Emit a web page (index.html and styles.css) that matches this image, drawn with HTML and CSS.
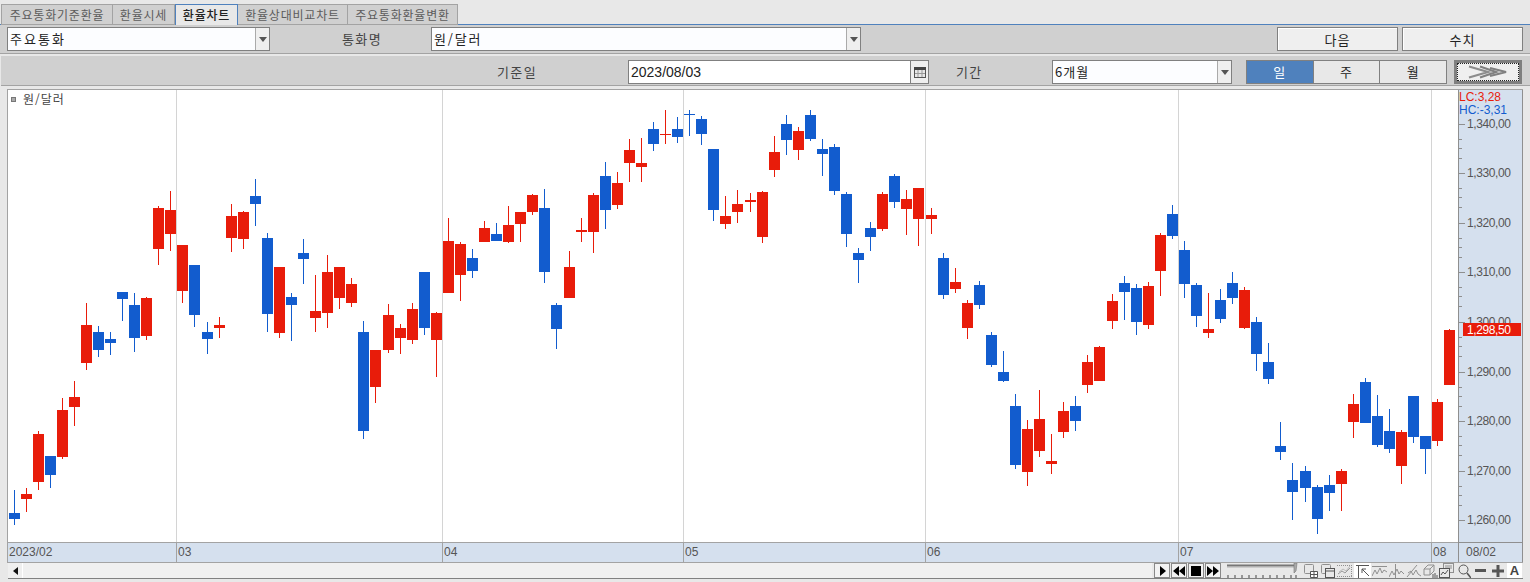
FILE: index.html
```html
<!DOCTYPE html>
<html lang="ko">
<head>
    <meta charset="UTF-8">
    <title>환율차트</title>
    <link rel="stylesheet" href="styles.css">
</head>
<body>

<!--tabs-->
<ul class="tabs">
    <li class="tab1">주요통화기준환율</li>
    <li class="tab2">환율시세</li>
    <li class="tab3 current">환율차트</li>
    <li class="tab4">환율상대비교차트</li>
    <li class="tab5">주요통화환율변환</li>
</ul>

<!--first bar-->
<div class="bar bar1">
    <div class="combo combo1">
        <span class="combo-text">주요통화</span>
        <span class="combo-btn"><i class="caret"></i></span>
    </div>
    <span class="label label-name">통화명</span>
    <div class="combo combo2">
        <span class="combo-text">원/달러</span>
        <span class="combo-btn"><i class="caret"></i></span>
    </div>
    <div class="actions">
        <button class="btn">다음</button>
        <button class="btn">수치</button>
    </div>
</div>

<!--second bar-->
<div class="bar bar2">
    <span class="label label-date">기준일</span>
    <div class="combo date">
        <span class="combo-text num">2023/08/03</span>
        <span class="combo-btn">
            <svg width="12" height="11" viewBox="0 0 12 11">
                <rect x="0.5" y="0.5" width="11" height="10" fill="#e8e8e8" stroke="#555"/>
                <rect x="0" y="0" width="12" height="3" fill="#444"/>
                <path d="M4 3v7M8 3v7M1 6.5h10" stroke="#999" fill="none"/>
            </svg>
        </span>
    </div>
    <span class="label label-period">기간</span>
    <div class="combo combo3">
        <span class="combo-text">6개월</span>
        <span class="combo-btn"><i class="caret"></i></span>
    </div>
    <div class="seg">
        <span class="on">일</span>
        <span>주</span>
        <span>월</span>
    </div>
    <button class="arrow-btn">
        <svg width="40" height="14" viewBox="0 0 40 14">
            <path d="M1 1.5L20 7L1 12.5" fill="none" stroke="#8c8c8c" stroke-width="2.2"/>
            <path d="M12 1.5L28 7L12 12.5" fill="none" stroke="#808080" stroke-width="2.2"/>
            <path d="M22 3L38 7L22 11" fill="none" stroke="#808080" stroke-width="2.2"/>
        </svg>
    </button>
</div>

<!--chart-->
<div class="chart">
    <div class="plot">
        <svg id="plot" class="plot-svg" width="1449" height="452" viewBox="8 90 1449 452"></svg>
        <div class="legend"><i class="legend-mark"></i>원/달러</div>
    </div>
    <div class="axis">
        <svg id="axis" width="64" height="452" viewBox="1458 90 64 452"></svg>
    </div>
    <div class="dates">
        <span>2023/02</span>
        <span>03</span>
        <span>04</span>
        <span>05</span>
        <span>06</span>
        <span>07</span>
        <span>08</span>
    </div>
    <div class="last-date">08/02</div>
</div>

<!--scroll and tools-->
<div class="tools">
    <span class="scroll-btn"><i class="tri-left"></i></span>
    <div class="track"></div>
    <div class="player">
        <span><svg width="7" height="10" viewBox="0 0 7 10"><path d="M1 0L7 5L1 10z"/></svg></span>
        <span><svg width="12" height="10" viewBox="0 0 12 10"><path d="M6 0L0 5L6 10zM12 0L6 5L12 10z"/></svg></span>
        <span><svg width="10" height="10" viewBox="0 0 10 10"><rect width="10" height="10"/></svg></span>
        <span><svg width="12" height="10" viewBox="0 0 12 10"><path d="M0 0L6 5L0 10zM6 0L12 5L6 10z"/></svg></span>
    </div>
    <svg class="slider" width="72" height="15" viewBox="0 0 72 15">
        <path d="M1 2.5h67" stroke="#777" stroke-width="2"/>
        <path d="M1 4.5h67" stroke="#ccc"/>
        <path d="M68 0h3l-1 8l-2 2z" fill="#aaa" stroke="#777" stroke-width="0.6"/>
        <path d="M2 12v3M9 12v3M16 12v3M23 12v3M30 12v3M37 12v3M44 12v3M51 12v3M58 12v3M65 12v3M70 12v3" stroke="#444"/>
    </svg>
    <div class="icons">
        <svg class="ico ico-first" width="14" height="14" viewBox="0 0 14 14">
            <rect x="0.5" y="0.5" width="9" height="9" rx="1"/>
            <path class="dark" d="M6.5 7.5h7v6h-7zM10 7.5v6M6.5 10.5h7" fill="#fff"/>
        </svg>
        <svg class="ico" width="14" height="14" viewBox="0 0 14 14">
            <rect x="0.5" y="0.5" width="9" height="9" rx="1"/>
            <rect class="dark" x="4.5" y="4.5" width="9" height="9" fill="#e8e8e8"/>
            <path class="dark" d="M4.5 7h9"/>
        </svg>
        <svg class="ico" width="15" height="14" viewBox="0 0 15 14">
            <path d="M0 1.5h15M0 12.5h15M14.5 1v12" stroke-dasharray="1 1"/>
            <path d="M1 10L5 7L8 9L13 4" stroke="#999"/>
            <path d="M2 8L6 5L9 7L13 2" stroke="#bbb"/>
        </svg>
        <span class="ico-on">
            <svg class="ico" width="14" height="14" viewBox="0 0 14 14">
                <path class="dark" d="M0 1.5h13M2.5 2v12M13 12L6 5M6 9V5h4"/>
            </svg>
        </span>
        <svg class="ico" width="15" height="14" viewBox="0 0 15 14">
            <path d="M0 2.5h15"/>
            <path d="M0 12L3 6L5 10L8 4L10 9L12 6L15 8"/>
        </svg>
        <svg class="ico" width="15" height="14" viewBox="0 0 15 14">
            <path d="M6.5 0v14"/>
            <path d="M0 13L3 7L5 11L8 5L10 10L12 7L15 10"/>
        </svg>
        <svg class="ico" width="15" height="14" viewBox="0 0 15 14">
            <path d="M1 13L11 1"/>
            <path d="M2 9L5 7L7 11L10 6L12 10L15 12"/>
        </svg>
        <svg class="ico ico-tight" width="15" height="14" viewBox="0 0 15 14">
            <path d="M1 5L5 1h6v6L7 11H1zM1 5h6v6M7 5L11 1"/>
            <path class="dark" d="M10 10v4M12 9v5M14 11v3"/>
        </svg>
        <svg class="ico" width="15" height="15" viewBox="0 0 15 15">
            <rect x="4.5" y="0.5" width="10" height="9"/>
            <path d="M6 3h7M6 5h7"/>
            <rect class="dark" x="0.5" y="5.5" width="10" height="9" fill="#e8e8e8"/>
            <path class="dark" d="M2 12L4 9L6 11L9 7"/>
        </svg>
        <svg class="ico glass" width="13" height="14" viewBox="0 0 13 14">
            <circle cx="5.5" cy="5.5" r="4.5"/>
            <path d="M9 9L13 14" stroke-width="1.6"/>
        </svg>
        <svg class="ico minus" width="11" height="3" viewBox="0 0 11 3"><rect width="11" height="3"/></svg>
        <svg class="ico plus" width="12" height="12" viewBox="0 0 12 12"><path d="M0 4.5h12v3H0zM4.5 0h3v12h-3z"/></svg>
        <span class="ico-a">A</span>
    </div>
</div>

<script src="chart.js"></script>
</body>
</html>
```

FILE: styles.css
```css
*{
    margin: 0;
    padding: 0;
    box-sizing: border-box;
}

body{
    width: 1530px;
    height: 582px;
    overflow: hidden;
    background: #e8e8e8;
    font-family: "Noto Sans CJK KR", "Liberation Sans", sans-serif;
    font-size: 13px;
    letter-spacing: 1px;
    color: #333;
}

.num{
    font-family: "Liberation Sans", sans-serif;
    letter-spacing: 0;
}

/*tabs*/
.tabs{
    display: flex;
    height: 25px;
    padding: 4px 0 0 1px;
    list-style: none;
    border-bottom: 1px solid #4f81bd;
}

.tabs li{
    height: 21px;
    line-height: 19px;
    text-align: center;
    font-size: 12px;
    letter-spacing: 0.8px;
    color: #5c5c5c;
    background: #d0d0d0;
    border: 1px solid #a3a3a3;
    border-left: 0;
    white-space: nowrap;
}

.tabs .tab1{
    width: 112px;
    border-left: 1px solid #a3a3a3;
}
.tabs .tab2{ width: 62px; }
.tabs .tab3{ width: 63px; }
.tabs .tab4{ width: 110px; }
.tabs .tab5{ width: 110px; }

.tabs li.current{
    height: 21px;
    color: #222;
    font-weight: 500;
    background: #e8e8e8;
    border: 1px solid #4f81bd;
    border-bottom: 0;
}

/*bars*/
.bar{
    display: flex;
    align-items: flex-start;
    background: #d0d0d0;
    border-bottom: 1px solid #a3a3a3;
}

.bar1{
    height: 29px;
    padding: 2px 7px 0;
}

.bar2{
    height: 30px;
    margin: 2px 0 3px 1px;
    padding: 4px 0 0 496px;
}

.label{
    line-height: 24px;
    letter-spacing: 1.4px;
    color: #444;
    white-space: nowrap;
}

.label-name{
    width: 89px;
    margin-left: 72px;
}

.label-date{
    width: 40px;
}

.label-period{
    width: 27px;
    margin-left: 27px;
}

/*combo*/
.combo{
    display: flex;
    height: 24px;
    background: #fcfdff;
    border: 1px solid #808080;
}

.combo1{ width: 263px; }
.combo2{ width: 430px; }
.combo3{ width: 180px; margin-left: 69px; }
.date{ width: 301px; margin-left: 91px; background: #fff; }

.combo-text{
    flex: 1;
    padding-left: 2px;
    line-height: 21px;
    color: #222;
    white-space: nowrap;
}

.combo1 .combo-text{
    letter-spacing: 2px;
}

.combo2 .combo-text{
    letter-spacing: 1.8px;
}

.date .combo-text{
    line-height: 22px;
    font-size: 14px;
    letter-spacing: 0;
}

.combo-btn{
    display: flex;
    align-items: center;
    justify-content: center;
    width: 14px;
    background: #efefef;
    border-left: 1px solid #aaa;
}

.date .combo-btn{
    width: 18px;
    border-left-color: #808080;
}

.caret{
    width: 0;
    height: 0;
    border-top: 5px solid #555;
    border-left: 4px solid transparent;
    border-right: 4px solid transparent;
}

/*buttons*/
.actions{
    display: flex;
    gap: 4px;
    margin-left: auto;
}

.btn{
    width: 121px;
    height: 24px;
    font: inherit;
    letter-spacing: 1px;
    color: #222;
    background: #efefef;
    border: 1px solid #808080;
    box-shadow: inset 1px 1px 0 #fff;
}

.seg{
    display: flex;
    width: 201px;
    height: 24px;
    margin-left: 14px;
    background: #e8e8e8;
    border: 1px solid #808080;
}

.seg span{
    flex: 1;
    text-align: center;
    line-height: 21px;
    color: #222;
    border-left: 1px solid #808080;
}

.seg span:first-child{
    border-left: 0;
}

.seg .on{
    color: #fff;
    background: #4f81bd;
}

.arrow-btn{
    display: flex;
    align-items: center;
    justify-content: center;
    width: 68px;
    height: 24px;
    margin-left: 7px;
    background: #efefef;
    border: 3px solid #7f7f7f;
    outline: 1px dotted #222;
    outline-offset: -4px;
}

/*chart*/
.chart{
    display: grid;
    grid-template-columns: 1450px 65px;
    grid-template-rows: 452px 20px;
    width: 1516px;
    height: 474px;
    margin-left: 7px;
    border-top: 1px solid #a3a3a3;
    border-left: 1px solid #a3a3a3;
    border-bottom: 1px solid #a3a3a3;
    color: #555;
    font-family: "Liberation Sans", sans-serif;
    font-size: 12px;
    letter-spacing: 0;
}

.plot{
    position: relative;
    background: #fff;
}

.plot-svg{
    display: block;
}

.legend{
    position: absolute;
    top: 1px;
    left: 3px;
    display: flex;
    align-items: center;
    gap: 7px;
    font-family: "Noto Sans CJK KR", sans-serif;
    font-size: 12px;
    letter-spacing: 1px;
    line-height: 16px;
    color: #444;
}

.legend-mark{
    width: 5px;
    height: 5px;
    background: #aaa;
    border: 1px solid #777;
}

.axis{
    background: #d5e0ee;
    border-left: 1px solid #8f8f8f;
    border-right: 1px solid #8f8f8f;
}

.axis svg{
    display: block;
}

.axis text{
    font-family: "Liberation Sans", sans-serif;
    font-size: 12px;
    letter-spacing: -0.4px;
    fill: #555;
}

.axis .lc{ fill: #e81c0a; letter-spacing: 0; }
.axis .hc{ fill: #125cce; letter-spacing: 0; }
.axis .last{ fill: #fff; }

.dates{
    display: grid;
    grid-template-columns: 169px 266px 241px 242px 253px 253px 26px;
    background: #d5e0ee;
    border-top: 1px solid #a3a3a3;
    line-height: 18px;
}

.dates span{
    padding-left: 1px;
    border-right: 1px solid #a3a3a3;
}

.dates span:last-child{
    border-right: 0;
}

.last-date{
    padding-left: 7px;
    line-height: 18px;
    background: #d5e0ee;
    border: 1px solid #8f8f8f;
    border-bottom: 0;
}

/*scroll and tools*/
.tools{
    display: flex;
    align-items: center;
    width: 1515px;
    height: 16px;
    margin-left: 8px;
    border-bottom: 1px solid #808080;
}

.tools > *{
    flex-shrink: 0;
}

.scroll-btn{
    display: flex;
    align-items: center;
    justify-content: center;
    width: 15px;
    height: 15px;
    background: #efefef;
    border-right: 1px solid #fff;
}

.tri-left{
    width: 0;
    height: 0;
    border-right: 5px solid #111;
    border-top: 4px solid transparent;
    border-bottom: 4px solid transparent;
}

.track{
    width: 1129px;
    height: 15px;
    background: #f0f0f0;
}

.player{
    display: flex;
    gap: 1px;
    margin-left: 2px;
}

.player span{
    display: flex;
    align-items: center;
    justify-content: center;
    width: 16px;
    height: 15px;
    background: #f2f2f2;
    border: 1px solid #888;
}

.slider{
    margin-left: 5px;
}

.icons{
    display: flex;
    align-items: center;
    margin-left: 6px;
}

.ico{
    display: block;
    flex-shrink: 0;
    margin-right: 2px;
    fill: none;
    stroke: #909090;
}

.ico-first{
    margin-right: 3px;
}

.ico-tight{
    margin-right: 1px;
}

.ico .dark{
    stroke: #555;
}

.ico-on{
    display: flex;
    align-items: center;
    justify-content: center;
    width: 17px;
    height: 15px;
    margin-right: 1px;
    background: #fff;
}

.ico-on .ico{
    margin: 0;
}

.glass{
    margin: 0 4px 0 2px;
    stroke: #555;
}

.minus,
.plus{
    stroke: none;
    fill: #555;
}

.minus{
    margin-right: 6px;
}

.plus{
    margin-right: 3px;
}

.ico-a{
    width: 15px;
    height: 15px;
    line-height: 15px;
    text-align: center;
    font-family: "Liberation Sans", sans-serif;
    font-size: 13px;
    font-weight: bold;
    letter-spacing: 0;
    color: #444;
    background: #fff;
}

/*candles*/
.grid{
    stroke: #d4d4d4;
}

.up{ fill: #e81c0a; }
.down{ fill: #125cce; }
.tick{ stroke: #8f8f8f; }
```

FILE: chart.js
```js
// all numbers are page pixels: left, wick top, wick bottom, body top, body bottom, r = red / b = blue
var candles = [
    [9,490,525,513,519,'b'],[21,488,512,494,499,'r'],[33,431,490,434,482,'r'],[45,456,488,456,475,'b'],
    [57,398,459,410,457,'r'],[69,381,426,397,407,'r'],[81,303,370,325,363,'r'],[93,326,357,332,350,'b'],
    [105,332,355,339,343,'b'],[117,292,321,292,299,'b'],[129,293,352,305,338,'b'],[141,297,340,298,336,'r'],
    [153,206,265,208,249,'r'],[165,191,251,210,234,'r'],[177,245,303,245,291,'r'],[189,265,327,265,315,'b'],
    [202,322,354,332,339,'b'],[214,317,338,325,328,'r'],[226,204,252,216,238,'r'],[238,211,249,212,239,'r'],
    [250,179,226,196,204,'b'],[262,233,332,238,314,'b'],[274,267,338,267,333,'r'],[286,293,341,297,305,'b'],
    [298,239,284,253,259,'b'],[310,275,332,311,318,'r'],[322,255,328,272,313,'r'],[334,267,309,267,298,'r'],
    [346,278,307,284,303,'r'],[358,321,439,332,431,'b'],[370,350,403,350,387,'r'],[383,304,353,315,350,'r'],
    [395,324,354,328,338,'r'],[407,303,344,309,340,'r'],[419,272,335,272,328,'b'],[431,312,377,313,340,'r'],
    [443,218,293,241,293,'r'],[455,242,301,244,275,'r'],[467,249,278,258,271,'b'],[479,221,242,228,242,'r'],
    [491,223,241,234,241,'b'],[503,206,243,225,242,'r'],[515,212,242,212,224,'r'],[527,194,215,195,212,'r'],
    [539,189,283,208,272,'b'],[551,303,349,305,329,'b'],[564,251,298,267,298,'r'],[576,218,242,230,232,'r'],
    [588,193,253,195,232,'r'],[600,162,229,176,210,'b'],[612,172,209,183,205,'r'],[624,139,182,150,163,'r'],
    [636,138,182,163,167,'r'],[648,122,151,129,144,'b'],[660,110,144,134,135,'r'],[672,117,143,129,137,'b'],
    [684,110,136,114,115,'b'],[696,116,145,119,134,'b'],[708,149,221,149,210,'b'],[720,196,229,216,224,'r'],
    [732,190,223,204,212,'r'],[745,193,212,200,202,'r'],[757,191,243,192,237,'r'],[769,136,177,152,170,'r'],
    [781,115,155,124,140,'b'],[793,127,160,131,150,'r'],[805,110,141,115,139,'b'],[817,139,176,149,154,'b'],
    [829,144,195,147,191,'b'],[841,192,247,194,234,'b'],[853,248,283,253,260,'b'],[865,222,251,228,237,'b'],
    [877,192,231,194,229,'r'],[889,174,208,176,202,'b'],[901,190,235,199,209,'r'],[913,188,246,188,219,'r'],
    [926,208,234,215,219,'r'],[938,253,299,258,295,'b'],[950,268,293,282,289,'r'],[962,300,339,303,328,'r'],
    [974,281,309,285,305,'b'],[986,332,367,335,365,'b'],[998,351,382,372,381,'b'],[1010,394,469,406,465,'b'],
    [1022,420,486,429,472,'r'],[1034,390,457,419,451,'r'],[1046,434,474,461,464,'r'],[1058,402,438,411,432,'r'],
    [1070,396,431,406,421,'b'],[1082,355,393,362,385,'r'],[1094,346,381,347,381,'r'],[1107,294,329,301,321,'r'],
    [1119,276,320,283,292,'b'],[1131,284,335,288,322,'b'],[1143,282,329,286,325,'r'],[1155,233,296,235,271,'r'],
    [1167,205,239,214,236,'b'],[1179,241,298,250,284,'b'],[1191,283,327,285,316,'b'],[1203,293,338,329,333,'r'],
    [1215,289,323,300,319,'b'],[1227,272,304,283,298,'b'],[1239,287,329,290,328,'r'],[1251,317,371,322,354,'b'],
    [1263,343,384,362,379,'b'],[1275,422,460,446,452,'b'],[1287,463,520,480,492,'b'],[1300,466,502,471,488,'b'],
    [1312,485,534,487,519,'b'],[1324,475,511,485,493,'b'],[1336,469,511,471,484,'r'],[1348,394,438,404,422,'r'],
    [1360,378,423,382,423,'b'],[1372,395,447,416,445,'b'],[1384,409,453,431,449,'b'],[1396,430,484,432,466,'r'],
    [1408,396,443,396,437,'b'],[1420,436,474,436,449,'b'],[1432,399,446,402,441,'r'],[1444,329,385,330,385,'r']
];

var gridLines = [176, 442, 683, 925, 1178, 1431];
var prices = ['1,340,00','1,330,00','1,320,00','1,310,00','1,300,00','1,290,00','1,280,00','1,270,00','1,260,00'];

var NS = 'http://www.w3.org/2000/svg';

function add(parent, name, attrs, text) {
    var el = document.createElementNS(NS, name);
    for (var key in attrs) {
        el.setAttribute(key, attrs[key]);
    }
    if (text) {
        el.textContent = text;
    }
    parent.appendChild(el);
    return el;
}

/*1.plot*/
var plot = document.getElementById('plot');

gridLines.forEach(function (x) {
    add(plot, 'line', {x1: x + 0.5, x2: x + 0.5, y1: 90, y2: 542, 'class': 'grid'});
});

candles.forEach(function (c) {
    var cls = c[5] === 'r' ? 'up' : 'down';
    add(plot, 'rect', {x: c[0] + 5, y: c[1], width: 1, height: c[2] - c[1], 'class': cls});
    add(plot, 'rect', {x: c[0], y: c[3], width: 11, height: c[4] - c[3], 'class': cls});
});

/*2.price axis*/
var axis = document.getElementById('axis');

add(axis, 'text', {x: 1458, y: 101, 'class': 'lc'}, 'LC:3,28');
add(axis, 'text', {x: 1458, y: 114, 'class': 'hc'}, 'HC:-3,31');

prices.forEach(function (label, i) {
    var y = Math.round(123.5 + i * 49.6);
    add(axis, 'line', {x1: 1458, x2: 1464, y1: y + 0.5, y2: y + 0.5, 'class': 'tick'});
    add(axis, 'text', {x: 1466, y: y + 4}, label);
    if (i < prices.length - 1) {
        [15, 24, 34].forEach(function (d) {
            add(axis, 'line', {x1: 1458, x2: 1461, y1: y + d + 0.5, y2: y + d + 0.5, 'class': 'tick'});
        });
    }
});

add(axis, 'rect', {x: 1462, y: 323, width: 58, height: 13, 'class': 'up'});
add(axis, 'text', {x: 1466, y: 334, 'class': 'last'}, '1,298,50');
```
